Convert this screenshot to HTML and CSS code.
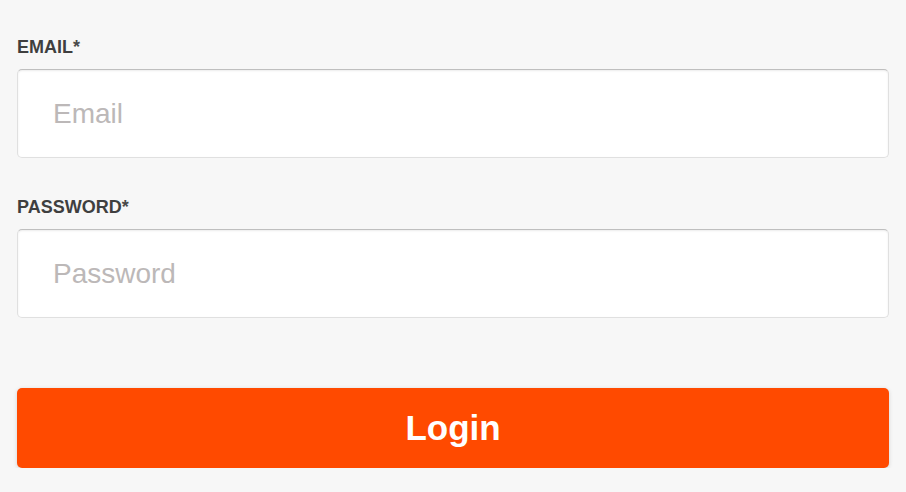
FILE: index.html
```html
<!DOCTYPE html>
<html lang="en">
<head>
  <meta charset="UTF-8">
  <meta name="viewport" content="width=device-width, initial-scale=1.0">
  <title>Login</title>
  <link rel="stylesheet" href="styles.css">
</head>
<body>
  <form class="login-form" onsubmit="return false">
    <div class="field">
      <label for="email">EMAIL<span class="req">*</span></label>
      <input type="email" id="email" placeholder="Email">
    </div>

    <div class="field">
      <label for="password">PASSWORD<span class="req">*</span></label>
      <input type="password" id="password" placeholder="Password">
    </div>

    <button type="submit" class="login-btn">Login</button>
  </form>
</body>
</html>
```

FILE: styles.css
```css
* {
  margin: 0;
  padding: 0;
  box-sizing: border-box;
}

body {
  font-family: "Liberation Sans", Arial, sans-serif;
  background-color: #f7f7f7;
  color: #444;
  padding: 37px 17px 0;
}

.login-form {
  display: flex;
  flex-direction: column;
}

.field {
  display: flex;
  flex-direction: column;
  gap: 11px;
  margin-bottom: 39px;
}

.field label {
  font-size: 18px;
  font-weight: 700;
  color: #3f3f3f;
}

.req {
  color: #4a4a4a;
}

.field input {
  height: 89px;
  width: 100%;
  padding: 0 35px;
  font-family: inherit;
  font-size: 28px;
  color: #333;
  background-color: #fff;
  border: 1px solid #e0e0e0;
  border-top-color: #bfbfbf;
  border-radius: 5px;
  box-shadow: inset 0 1px 2px rgba(0, 0, 0, 0.08);
  outline: none;
}

.field input::placeholder {
  color: #bcb8b8;
}

.login-btn {
  margin-top: 31px;
  height: 80px;
  width: 100%;
  border: none;
  border-radius: 5px;
  background-color: #ff4a00;
  color: #fff;
  font-family: inherit;
  font-size: 35px;
  font-weight: 700;
  cursor: pointer;
  box-shadow: 0 1px 4px rgba(0, 0, 0, 0.15);
}
```
